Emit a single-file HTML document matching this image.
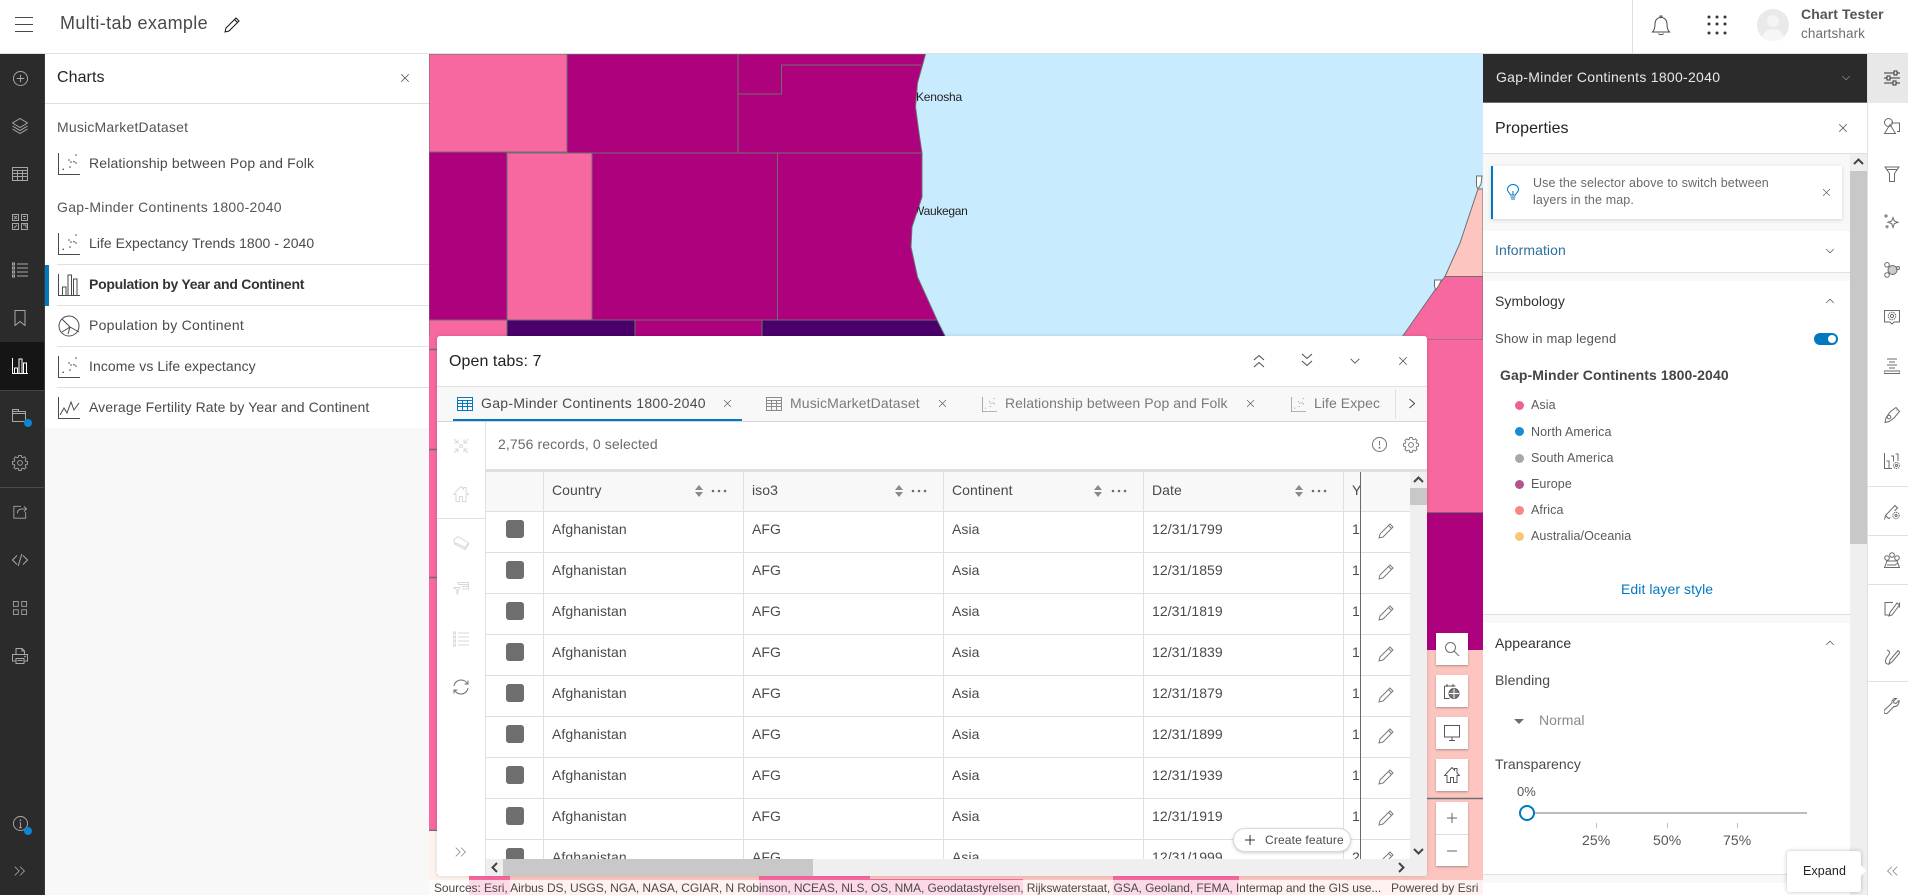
<!DOCTYPE html>
<html><head><meta charset="utf-8"><title>Multi-tab example</title>
<style>
*{box-sizing:border-box}
html,body{margin:0;padding:0;width:1908px;height:895px;overflow:hidden;background:#fff}
body{position:relative;font-family:"Liberation Sans",sans-serif;font-size:14px;color:#4a4a4a;letter-spacing:.07px}
.a{position:absolute}
.t{position:absolute;white-space:nowrap;line-height:20px}
svg.i{position:absolute;fill:none;stroke:currentColor;stroke-width:1;overflow:visible}
.dk{color:#a8a8a8}
.rw{position:absolute;left:0;width:924px;height:41px;border-bottom:1px solid #dfdfdf;background:#fff}
.rw .t{top:7px}
.cb{position:absolute;left:20px;top:8px;width:18px;height:18px;border-radius:3px;background:#6e6e6e}
.v{position:absolute;top:472px;width:1px;height:387px;background:#e0e0e0}
.btn{position:absolute;left:1436px;width:32px;background:#fff;box-shadow:0 1px 2px rgba(0,0,0,.3)}
</style></head>
<body>
<svg width="0" height="0" style="position:absolute">
<defs>
<symbol id="close" viewBox="0 0 16 16"><path d="M3 3l10 10M13 3L3 13"/></symbol>
<symbol id="cdown" viewBox="0 0 16 16"><path d="M3 5.500l5 5 5-5"/></symbol>
<symbol id="cup" viewBox="0 0 16 16"><path d="M3 10.500l5-5 5 5"/></symbol>
<symbol id="dbl" viewBox="0 0 16 16"><path d="M2 3l5 5-5 5M8 3l5 5-5 5"/></symbol>
<symbol id="dbll" viewBox="0 0 16 16"><path d="M8 3L3 8l5 5M14 3L9 8l5 5"/></symbol>
<symbol id="pen" viewBox="0 0 16 16"><path d="M1 15l1-4L12 1l3 3L5 14zM10.500 2.500l3 3"/></symbol>
<symbol id="plusc" viewBox="0 0 16 16"><circle cx="8" cy="8" r="7.500"/><path d="M8 4v8M4 8h8"/></symbol>
<symbol id="layers" viewBox="0 0 16 16"><path d="M8 .5l7.500 4.500L8 9.500.5 5zM.5 8l7.500 4.500L15.500 8M.5 11l7.500 4.500 7.500-4.500"/></symbol>
<symbol id="table" viewBox="0 0 16 16"><path d="M.5 1.500h15v13H.5zM.5 4.500h15M.5 7.500h15M.5 10.500h15M5.500 4.500v10M10.500 4.500v10"/></symbol>
<symbol id="widgets" viewBox="0 0 16 16"><path d="M.5.500h6v6h-6zM9.500 .5h6v6h-6zM.5 9.500h6v6h-6zM9.500 9.500h6v6h-6zM2 2l3 3M5 2L2 5M11 2.500h3M11.500 4.500h2M2 14l3-3M11 11h3v3"/></symbol>
<symbol id="list" viewBox="0 0 16 16"><path d="M5 2h11M5 6h11M5 10h11M5 14h11M.5 1h2v2h-2zM.5 5h2v2h-2zM.5 9h2v2h-2zM.5 13h2v2h-2z"/></symbol>
<symbol id="bmark" viewBox="0 0 16 16"><path d="M3 .5h10v15l-5-4-5 4z"/></symbol>
<symbol id="bars" viewBox="0 0 16 16"><path d="M.5 0v15.500H16M2.500 10h3v5.500h-3zM7 1h3v14.500H7zM11.500 5h3v10.500h-3z"/></symbol>
<symbol id="file" viewBox="0 0 16 16"><path d="M.5 3.500h13v10H.5zM.5 5.500h13M.5 3.500v-2h6v2"/></symbol>
<symbol id="gear" viewBox="-1 0 18 18"><path d="M6.600.5h2.800l.4 2 1.400.6 1.700-1.100 2 2-1.100 1.700.6 1.400 2 .4v2.800l-2 .4-.6 1.400 1.100 1.700-2 2-1.700-1.100-1.400.6-.4 2H6.600l-.4-2-1.400-.6-1.700 1.100-2-2 1.100-1.700-.6-1.400-2-.4V7.500l2-.4.6-1.400-1.100-1.700 2-2 1.700 1.100 1.400-.6z"/><circle cx="8" cy="8.900" r="2.700"/></symbol>
<symbol id="share" viewBox="0 0 16 16"><path d="M9 1.500H1v13.500h13.500V8M5 9.500C5 6 7 4.500 11 4.500h4M12.500 1.500l3 3-3 3"/></symbol>
<symbol id="code" viewBox="0 0 16 16"><path d="M5 3.500L.5 8 5 12.500M11 3.500L15.500 8 11 12.500M9.800 2L6.200 14"/></symbol>
<symbol id="apps" viewBox="0 0 16 16"><path d="M.5.500h5.500v5.500H.5zM10 .5h5.500v5.500H10zM.5 10h5.500v5.500H.5zM10 10h5.500v5.500H10z"/></symbol>
<symbol id="print" viewBox="0 0 16 16"><path d="M4 6V.5h6l2.500 2.500v3M10 .5V3h2.500M4 13H.5V6.500h15V13H12M4 10.500h8v5H4zM5.500 12.500h5"/><circle cx="13" cy="8.500" r=".4"/></symbol>
<symbol id="info" viewBox="0 0 16 16"><circle cx="8" cy="8" r="7.500"/><path d="M8 7v5M6.500 12.500h3M7 7h1"/><circle cx="8" cy="4.500" r=".4"/></symbol>
<symbol id="warn" viewBox="0 0 16 16"><circle cx="8" cy="8" r="7.500"/><path d="M8 4v5"/><circle cx="8" cy="11.500" r=".5"/></symbol>
<symbol id="home" viewBox="0 0 16 16"><path d="M.5 8.500L8 .5l2.500 2.700V1.500h2.500v4.500l2.500 2.500H13v7h-3.500v-5h-3v5H3v-7z"/></symbol>
<symbol id="fit" viewBox="0 0 16 16"><circle cx="8" cy="8" r="1.500"/><path d="M1 1l4 4M5 1.500V5H1.500M15 1l-4 4M11 1.500V5h3.500M1 15l4-4M1.500 11H5v3.500M15 15l-4-4M11 14.500V11h3.500"/></symbol>
<symbol id="tag" viewBox="0 0 16 16"><path d="M.5 5L5 1.500 15.500 8 12 12.500 1.500 7.500zM1.500 7.500V9L12 14.500 15.500 9.500V8M12 12.500v2"/></symbol>
<symbol id="fcard" viewBox="0 0 16 16"><path d="M5 2V.5h10.500v6.500H9M5 2.500h10.500M9 4.500h6.500M.5 5.500h6.500L5 8v3l-1 1V8z"/></symbol>
<symbol id="refresh" viewBox="0 0 16 16"><path d="M1 7C1.500 3.500 4.500 1 8 1c2.800 0 5 1.400 6.200 3.500M15 9c-.5 3.500-3.500 6-7 6-2.800 0-5-1.400-6.200-3.500M15 1.500v3.500h-3.500M1 14.500V11h3.500"/></symbol>
<symbol id="scat" viewBox="0 0 22 22"><path d="M.5 0v21.500H22"/><g fill="currentColor" stroke="none"><circle cx="5.300" cy="16.300" r=".8"/><circle cx="12" cy="14" r=".8"/><circle cx="11" cy="7" r=".8"/><circle cx="16" cy="8.700" r=".8"/><circle cx="18" cy="2" r=".8"/><circle cx="18" cy="10" r=".8"/><circle cx="13" cy="9" r=".8"/></g></symbol>
<symbol id="barsb" viewBox="0 0 22 22"><path d="M.5 0v21.500H22M4.500 13h3.500v8.500H4.500zM10 1h3.500v20.500H10zM15.500 5H19v16.500h-3.500z"/></symbol>
<symbol id="pie" viewBox="0 0 22 22"><circle cx="11" cy="11" r="10"/><path d="M4 4l8 8-8 5M12 12l9 5M12 12l-2 7"/></symbol>
<symbol id="linec" viewBox="0 0 22 22"><path d="M.5 0v21.500H22M2 18l4-7 3 5 4-11 3 8 5-7"/></symbol>
<symbol id="sliders" viewBox="0 0 16 16"><path d="M0 3h10M13 3h3M0 8h3M6 8h10M0 13h9M12 13h4M10 1h3v4h-3zM3 6h3v4H3zM9 11h3v4H9z"/></symbol>
<symbol id="shapes" viewBox="0 0 16 16"><circle cx="4.500" cy="4.500" r="4"/><path d="M7 5h8.500v8.500H13M.5 15.500L6 6.500l5.500 9z"/></symbol>
<symbol id="funnel" viewBox="0 0 16 16"><path d="M1 1h14L10.500 7.500v8h-5v-8zM2.500 3.500h11"/></symbol>
<symbol id="spark" viewBox="0 0 16 16"><path d="M9 4.500l1.300 3.500 3.700 1.300-3.700 1.300L9 14.500l-1.300-3.900L4 9.300 7.700 8zM2 1v4M0 3h4M3 12v3.500M1.300 13.700h3.500"/></symbol>
<symbol id="clust" viewBox="0 0 16 16"><circle cx="8.500" cy="8" r="4.500" fill="currentColor" fill-opacity=".35"/><circle cx="3" cy="2.800" r="2.300"/><circle cx="3" cy="13" r="2.300"/><circle cx="14" cy="6" r="1.500"/></symbol>
<symbol id="gbox" viewBox="0 0 16 16"><path d="M.5 1.500h15v11.500H10L8 15l-2-2H.5z"/><circle cx="8" cy="7" r="3.800" stroke-dasharray="1.600 .8"/><circle cx="8" cy="7" r="1.600"/></symbol>
<symbol id="align" viewBox="0 0 16 16"><path d="M3 1h10M5 4h6M3 7h10M5 10h6M0 13h16v2.500H0z"/></symbol>
<symbol id="ptag" viewBox="0 0 16 16"><path d="M6 5l6-4.500 3.500 4L10 11l-5 3.500-4 1 1-4.500zM12 3.500h.5"/><circle cx="5" cy="10" r="1.800"/></symbol>
<symbol id="bgear" viewBox="0 0 16 16"><path d="M.5 0v15.500H8M2.500 8h2.500v7M7 3h2.500v5.500M11.500 1H14v7"/><circle cx="12.500" cy="12.500" r="3" stroke-dasharray="1.300 .7"/><circle cx="12.500" cy="12.500" r="1"/></symbol>
<symbol id="pgear" viewBox="0 0 16 16"><path d="M.5 15.500l1-4L11 1.500l2.500 2.500-3 3M1.500 11.500l3 3 2-1"/><circle cx="12" cy="11.500" r="3.200" stroke-dasharray="1.400 .7"/><circle cx="12" cy="11.500" r="1"/></symbol>
<symbol id="people" viewBox="0 0 16 16"><circle cx="3" cy="6" r="2.300"/><circle cx="8" cy="3" r="2.300"/><circle cx="13" cy="6" r="2.300"/><path d="M.5 15.500L3 9h10l2.500 6.500zM3 13h8l3-2"/></symbol>
<symbol id="spen" viewBox="0 0 16 16"><path d="M9 1.500H1v12.500h5M15.500 1.500v5M5 15l1-3.500L13 2l2.500 2L8 14z"/></symbol>
<symbol id="wpen" viewBox="0 0 16 16"><path d="M5 15l1-4L14 1.500l2 2L8 13zM3 1c3 1 3 3 1.500 5S1 10 1.500 13c.3 1.500 2 2.500 3.500 2"/></symbol>
<symbol id="wrench" viewBox="0 0 16 16"><path d="M15 2.500l-3 3-2-.5-.5-2 3-2.500c-2.500-.5-5 1.500-4.500 4.500L.5 12c-.8 1-.8 2 0 3s2.200.8 3 0L10 8.500c3 .5 5.500-2.500 5-6z"/></symbol>
<symbol id="sort" viewBox="0 0 10 12"><path d="M5 0l4 5H1zM5 12l4-5H1z" fill="#8a8a8a" stroke="none"/></symbol>
<symbol id="dots" viewBox="0 0 16 4"><circle cx="2" cy="2" r="1.300" fill="#6e6e6e" stroke="none"/><circle cx="8" cy="2" r="1.300" fill="#6e6e6e" stroke="none"/><circle cx="14" cy="2" r="1.300" fill="#6e6e6e" stroke="none"/></symbol>
</defs>
</svg>

<!-- MAP -->
<svg class="a" style="left:0;top:0" width="1908" height="895" viewBox="0 0 1908 895">
<rect x="429" y="54" width="1054" height="841" fill="#c8ecfe"/>
<g stroke="#6e6e6e" stroke-width="1">
<rect x="429" y="54" width="138" height="98" fill="#f768a1"/>
<path d="M567 54H925.500L917.500 83 915.500 107 919 133 922 153 567 153z" fill="#ae017e"/>
<path d="M738 54V153M738 94H781.500V65H921" fill="none"/>
<rect x="429" y="152" width="78" height="168" fill="#ae017e"/>
<rect x="507" y="153" width="85" height="167" fill="#f768a1"/>
<path d="M592 153H922L922 197 912 227 911 247 917.500 277 937 320H592z" fill="#ae017e"/>
<path d="M777.500 153V320" fill="none"/>
<rect x="429" y="320" width="78" height="20" fill="#f768a1"/>
<rect x="507" y="320" width="128" height="20" fill="#49006a"/>
<rect x="635" y="320" width="127" height="20" fill="#ae017e"/>
<path d="M762 320H937L947 340H762z" fill="#49006a"/>
<path d="M1445 276.500L1460 243 1470 213 1478 189H1483V276.500z" fill="#fcc5c0"/>
<path d="M1400 340L1435 290 1445 276.500H1483V340z" fill="#f768a1"/>
<path d="M1476.500 176h5.500l-1 8-3 5-1.500-3zM1434.500 280h7l-3 6-3 4-1-4z" fill="#fff"/>
</g>
<rect x="429" y="336" width="8" height="495" fill="#f768a1"/>
<path d="M429 349.500h8M429 449.500h8M429 577.500h8M429 830.500h8" stroke="#6e6e6e" stroke-width="1.500"/>
<rect x="429" y="831" width="8" height="64" fill="#fdf3ee"/>
<rect x="1412" y="340" width="71" height="173" fill="#f768a1"/>
<rect x="1412" y="513" width="71" height="137" fill="#ae017e"/>
<path d="M1427 512.500h56" stroke="#6e6e6e"/>
<rect x="1427" y="650" width="56" height="245" fill="#fcc5c0"/>
<path d="M1427 798.500h56" stroke="#6e6e6e" stroke-width="1.500"/>
<rect x="437" y="876" width="990" height="19" fill="#fcc5c0"/>
<rect x="437" y="876" width="32" height="19" fill="#fdf3ee"/>
<rect x="469" y="876" width="41" height="19" fill="#f768a1"/>
<rect x="759" y="876" width="264" height="19" fill="#f768a1"/>
<rect x="1113" y="876" width="126" height="19" fill="#f768a1"/>
<rect x="870" y="876" width="153" height="3" fill="#fcc5c0"/>
</svg>
<div class="a" style="left:429px;top:880px;width:1054px;height:15px;background:rgba(255,255,255,.75)"></div>
<div class="t" style="left:434px;top:878px;font-size:12px;color:#4a4a4a;letter-spacing:-.08px">Sources: Esri, Airbus DS, USGS, NGA, NASA, CGIAR, N Robinson, NCEAS, NLS, OS, NMA, Geodatastyrelsen, Rijkswaterstaat, GSA, Geoland, FEMA, Intermap and the GIS use...</div>
<div class="t" style="left:1391px;top:878px;font-size:12px;letter-spacing:0">Powered by Esri</div>
<div class="t" style="left:916px;top:87px;font-size:12px;color:#222;letter-spacing:-.2px">Kenosha</div>
<div class="t" style="left:913px;top:201px;font-size:12px;color:#222;letter-spacing:-.3px;clip-path:inset(0 0 0 4px)">Waukegan</div>

<!-- HEADER -->
<div class="a" style="left:0;top:0;width:1908px;height:54px;background:#fff;border-bottom:1px solid #e0e0e0"></div>
<div class="a" style="left:15px;top:17px;width:18px;height:15px;border-top:1px solid #4a4a4a;border-bottom:1px solid #4a4a4a"></div>
<div class="a" style="left:15px;top:24px;width:18px;height:1px;background:#4a4a4a"></div>
<div class="t" style="left:60px;top:13px;font-size:18px;letter-spacing:.35px">Multi-tab example</div>
<svg class="i" style="left:224px;top:17px;color:#151515" width="16" height="16"><use href="#pen"/></svg>
<div class="a" style="left:1632px;top:0;width:1px;height:53px;background:#e0e0e0"></div>
<svg class="i" style="left:1652px;top:15px;color:#4a4a4a" width="18" height="21" viewBox="0 0 18 21"><path d="M.5 17c2-2 2.500-4 2.500-8 0-4 2.500-6.500 6-6.500s6 2.500 6 6.500c0 4 .5 6 2.500 8zM8 2.500V1h2v1.500M6.500 18.500c.5 1.500 4.500 1.500 5 0"/></svg>
<svg class="a" style="left:1706px;top:14px" width="22" height="22"><g fill="#333"><circle cx="3" cy="3" r="1.500"/><circle cx="11" cy="3" r="1.500"/><circle cx="19" cy="3" r="1.500"/><circle cx="3" cy="10" r="1.500"/><circle cx="11" cy="10" r="1.500"/><circle cx="19" cy="10" r="1.500"/><circle cx="3" cy="19" r="1.500"/><circle cx="11" cy="19" r="1.500"/><circle cx="19" cy="19" r="1.500"/></g></svg>
<svg class="a" style="left:1757px;top:9px" width="32" height="32"><circle cx="16" cy="16" r="16" fill="#e9e9e9"/><circle cx="16" cy="12" r="6" fill="#f4f4f4"/><path d="M5 29c2-7 6-9 11-9s9 2 11 9c-3 2-7 3-11 3s-8-1-11-3z" fill="#f6f6f6"/></svg>
<div class="t" style="left:1801px;top:4px;font-weight:bold;color:#555;letter-spacing:.1px">Chart Tester</div>
<div class="t" style="left:1801px;top:24px;color:#6e6e6e;letter-spacing:.1px;font-size:13.500px">chartshark</div>

<!-- LEFT RAIL -->
<div class="a" style="left:0;top:54px;width:45px;height:841px;background:#2b2b2b;border-right:1px solid #3a3a3a"></div>
<div class="a" style="left:0;top:342px;width:44px;height:48px;background:#151515"></div>
<div class="a" style="left:0;top:390px;width:44px;height:1px;background:#444"></div>
<div class="a" style="left:0;top:487px;width:44px;height:1px;background:#4a4a4a"></div>
<svg class="i dk" style="left:13px;top:71px" width="15" height="15"><use href="#plusc"/></svg>
<svg class="i dk" style="left:12px;top:118px" width="16" height="16"><use href="#layers"/></svg>
<svg class="i dk" style="left:12px;top:166px" width="16" height="16"><use href="#table"/></svg>
<svg class="i dk" style="left:12px;top:214px" width="16" height="16"><use href="#widgets"/></svg>
<svg class="i dk" style="left:12px;top:262px" width="16" height="16"><use href="#list"/></svg>
<svg class="i dk" style="left:12px;top:310px" width="16" height="16"><use href="#bmark"/></svg>
<svg class="i" style="left:12px;top:358px;color:#fff" width="16" height="16"><use href="#bars"/></svg>
<svg class="i dk" style="left:12px;top:408px" width="16" height="16"><use href="#file"/></svg>
<div class="a" style="left:24px;top:419px;width:8px;height:8px;border-radius:50%;background:#0b85d4"></div>
<svg class="i dk" style="left:12px;top:455px" width="16" height="16"><use href="#gear"/></svg>
<svg class="i dk" style="left:13px;top:505px" width="14" height="14"><use href="#share"/></svg>
<svg class="i dk" style="left:12px;top:552px" width="16" height="16"><use href="#code"/></svg>
<svg class="i dk" style="left:13px;top:601px" width="14" height="14"><use href="#apps"/></svg>
<svg class="i dk" style="left:12px;top:648px" width="16" height="16"><use href="#print"/></svg>
<svg class="i dk" style="left:13px;top:816px" width="15" height="15"><use href="#info"/></svg>
<div class="a" style="left:24px;top:827px;width:8px;height:8px;border-radius:50%;background:#0b85d4"></div>
<svg class="i dk" style="left:13px;top:864px" width="14" height="14"><use href="#dbl"/></svg>

<!-- CHARTS PANEL -->
<div class="a" style="left:45px;top:54px;width:384px;height:841px;background:#f8f8f8"></div>
<div class="a" style="left:45px;top:54px;width:384px;height:374px;background:#fff"></div>
<div class="a" style="left:45px;top:103px;width:384px;height:1px;background:#e0e0e0"></div>
<div class="t" style="left:57px;top:68px;font-size:16px;color:#222">Charts</div>
<svg class="i" style="left:399px;top:72px;color:#4a4a4a" width="12" height="12"><use href="#close"/></svg>
<div class="t" style="left:57px;top:117px;color:#555;letter-spacing:.2px">MusicMarketDataset</div>
<div class="t" style="left:57px;top:197px;color:#555;letter-spacing:.3px">Gap-Minder Continents 1800-2040</div>
<svg class="i" style="left:58px;top:153px;color:#4a4a4a" width="22" height="22"><use href="#scat"/></svg>
<div class="t" style="left:89px;top:153px;letter-spacing:.15px">Relationship between Pop and Folk</div>
<svg class="i" style="left:58px;top:233px;color:#4a4a4a" width="22" height="22"><use href="#scat"/></svg>
<div class="t" style="left:89px;top:233px;letter-spacing:.03px">Life Expectancy Trends 1800 - 2040</div>
<div class="a" style="left:57px;top:264px;width:372px;height:1px;background:#e0e0e0"></div>
<div class="a" style="left:45px;top:265px;width:4px;height:41px;background:#0079c1"></div>
<svg class="i" style="left:58px;top:274px;color:#4a4a4a" width="22" height="22"><use href="#barsb"/></svg>
<div class="t" style="left:89px;top:274px;font-weight:bold;color:#333;letter-spacing:-.27px">Population by Year and Continent</div>
<div class="a" style="left:57px;top:305px;width:372px;height:1px;background:#e0e0e0"></div>
<svg class="i" style="left:58px;top:315px;color:#4a4a4a" width="22" height="22"><use href="#pie"/></svg>
<div class="t" style="left:89px;top:315px;letter-spacing:.28px">Population by Continent</div>
<div class="a" style="left:57px;top:346px;width:372px;height:1px;background:#e0e0e0"></div>
<svg class="i" style="left:58px;top:356px;color:#4a4a4a" width="22" height="22"><use href="#scat"/></svg>
<div class="t" style="left:89px;top:356px">Income vs Life expectancy</div>
<div class="a" style="left:57px;top:387px;width:372px;height:1px;background:#e0e0e0"></div>
<svg class="i" style="left:58px;top:397px;color:#4a4a4a" width="22" height="22"><use href="#linec"/></svg>
<div class="t" style="left:89px;top:397px;letter-spacing:.1px">Average Fertility Rate by Year and Continent</div>

<!-- TABLE PANEL -->
<div class="a" style="left:437px;top:336px;width:990px;height:540px;background:#fff;border-radius:3px;box-shadow:0 0 4px rgba(0,0,0,.15)"></div>
<div class="t" style="left:449px;top:352px;font-size:16px;color:#222">Open tabs: 7</div>
<svg class="i" style="left:1252px;top:354px;color:#4a4a4a" width="14" height="14"><path d="M2 6l5-4.500L12 6M2 13l5-4.500 5 4.500"/></svg>
<svg class="i" style="left:1300px;top:353px;color:#4a4a4a" width="14" height="14"><path d="M2 1l5 4.500L12 1M2 8l5 4.500L12 8"/></svg>
<svg class="i" style="left:1348px;top:354px;color:#4a4a4a" width="14" height="14" viewBox="0 0 16 16"><use href="#cdown"/></svg>
<svg class="i" style="left:1397px;top:355px;color:#4a4a4a" width="12" height="12"><use href="#close"/></svg>
<div class="a" style="left:437px;top:386px;width:990px;height:36px;background:#f8f8f8;border-top:1px solid #e0e0e0;border-bottom:1px solid #d5d5d5"></div>
<div class="a" style="left:453px;top:419px;width:289px;height:2px;background:#0079c1"></div>
<svg class="i" style="left:457px;top:396px;color:#0079c1" width="16" height="16"><use href="#table"/></svg>
<div class="t" style="left:481px;top:393px;color:#4a4a4a;letter-spacing:.3px">Gap-Minder Continents 1800-2040</div>
<svg class="i" style="left:722px;top:398px;color:#4a4a4a" width="11" height="11"><use href="#close"/></svg>
<svg class="i" style="left:766px;top:396px;color:#8a8a8a" width="16" height="16"><use href="#table"/></svg>
<div class="t" style="left:790px;top:393px;color:#7a7a7a;letter-spacing:.12px">MusicMarketDataset</div>
<svg class="i" style="left:937px;top:398px;color:#4a4a4a" width="11" height="11"><use href="#close"/></svg>
<svg class="i" style="left:982px;top:397px;color:#8a8a8a" width="15" height="15"><use href="#scat"/></svg>
<div class="t" style="left:1005px;top:393px;color:#7a7a7a">Relationship between Pop and Folk</div>
<svg class="i" style="left:1245px;top:398px;color:#4a4a4a" width="11" height="11"><use href="#close"/></svg>
<svg class="i" style="left:1291px;top:397px;color:#8a8a8a" width="15" height="15"><use href="#scat"/></svg>
<div class="t" style="left:1314px;top:393px;color:#7a7a7a;width:66px;overflow:hidden">Life Expec</div>
<div class="a" style="left:1395px;top:389px;width:1px;height:30px;background:#e0e0e0"></div>
<svg class="i" style="left:1408px;top:398px;color:#4a4a4a" width="8" height="11"><path d="M1.500 1l5 4.500-5 4.500"/></svg>

<!-- table sidebar -->
<div class="a" style="left:485px;top:422px;width:1px;height:454px;background:#e0e0e0"></div>
<div class="a" style="left:437px;top:518px;width:48px;height:1px;background:#e0e0e0"></div>
<svg class="i" style="left:453px;top:438px;color:#d8d8d8" width="16" height="16"><use href="#fit"/></svg>
<svg class="i" style="left:453px;top:486px;color:#d8d8d8" width="16" height="16"><use href="#home"/></svg>
<svg class="i" style="left:453px;top:535px;color:#d8d8d8" width="16" height="16"><use href="#tag"/></svg>
<svg class="i" style="left:453px;top:582px;color:#d8d8d8" width="16" height="16"><use href="#fcard"/></svg>
<svg class="i" style="left:453px;top:631px;color:#d8d8d8" width="16" height="16"><use href="#list"/></svg>
<svg class="i" style="left:453px;top:679px;color:#6e6e6e" width="16" height="16"><use href="#refresh"/></svg>
<svg class="i" style="left:454px;top:845px;color:#8a8a8a" width="14" height="14"><use href="#dbl"/></svg>

<!-- toolbar -->
<div class="t" style="left:498px;top:434px;color:#6a6a6a;letter-spacing:.1px">2,756 records, 0 selected</div>
<svg class="i" style="left:1372px;top:437px;color:#6e6e6e" width="15" height="15"><use href="#warn"/></svg>
<svg class="i" style="left:1403px;top:437px;color:#6e6e6e" width="16" height="16"><use href="#gear"/></svg>
<div class="a" style="left:486px;top:469px;width:941px;height:3px;background:#e0e0e0"></div>

<!-- table head -->
<div class="a" style="left:486px;top:472px;width:924px;height:40px;background:#f8f8f8;border-bottom:1px solid #dfdfdf"></div>
<div class="t" style="left:552px;top:480px;color:#4a4a4a">Country</div>
<svg class="a" style="left:694px;top:485px" width="10" height="12"><use href="#sort"/></svg>
<svg class="a" style="left:711px;top:489px" width="16" height="4"><use href="#dots"/></svg>
<div class="t" style="left:752px;top:480px">iso3</div>
<svg class="a" style="left:894px;top:485px" width="10" height="12"><use href="#sort"/></svg>
<svg class="a" style="left:911px;top:489px" width="16" height="4"><use href="#dots"/></svg>
<div class="t" style="left:952px;top:480px">Continent</div>
<svg class="a" style="left:1093px;top:485px" width="10" height="12"><use href="#sort"/></svg>
<svg class="a" style="left:1111px;top:489px" width="16" height="4"><use href="#dots"/></svg>
<div class="t" style="left:1152px;top:480px">Date</div>
<svg class="a" style="left:1294px;top:485px" width="10" height="12"><use href="#sort"/></svg>
<svg class="a" style="left:1311px;top:489px" width="16" height="4"><use href="#dots"/></svg>
<div class="t" style="left:1352px;top:480px;width:8px;overflow:hidden">Y</div>

<!-- rows -->
<div class="a" style="left:486px;top:512px;width:924px;height:347px;overflow:hidden">
<div class="rw" style="top:0"><div class="cb"></div><div class="t" style="left:66px">Afghanistan</div><div class="t" style="left:266px">AFG</div><div class="t" style="left:466px">Asia</div><div class="t" style="left:666px">12/31/1799</div><div class="t" style="left:866px">1</div><svg class="i" style="left:892px;top:11px;color:#7a7a7a" width="16" height="16"><use href="#pen"/></svg></div>
<div class="rw" style="top:41px"><div class="cb"></div><div class="t" style="left:66px">Afghanistan</div><div class="t" style="left:266px">AFG</div><div class="t" style="left:466px">Asia</div><div class="t" style="left:666px">12/31/1859</div><div class="t" style="left:866px">1</div><svg class="i" style="left:892px;top:11px;color:#7a7a7a" width="16" height="16"><use href="#pen"/></svg></div>
<div class="rw" style="top:82px"><div class="cb"></div><div class="t" style="left:66px">Afghanistan</div><div class="t" style="left:266px">AFG</div><div class="t" style="left:466px">Asia</div><div class="t" style="left:666px">12/31/1819</div><div class="t" style="left:866px">1</div><svg class="i" style="left:892px;top:11px;color:#7a7a7a" width="16" height="16"><use href="#pen"/></svg></div>
<div class="rw" style="top:123px"><div class="cb"></div><div class="t" style="left:66px">Afghanistan</div><div class="t" style="left:266px">AFG</div><div class="t" style="left:466px">Asia</div><div class="t" style="left:666px">12/31/1839</div><div class="t" style="left:866px">1</div><svg class="i" style="left:892px;top:11px;color:#7a7a7a" width="16" height="16"><use href="#pen"/></svg></div>
<div class="rw" style="top:164px"><div class="cb"></div><div class="t" style="left:66px">Afghanistan</div><div class="t" style="left:266px">AFG</div><div class="t" style="left:466px">Asia</div><div class="t" style="left:666px">12/31/1879</div><div class="t" style="left:866px">1</div><svg class="i" style="left:892px;top:11px;color:#7a7a7a" width="16" height="16"><use href="#pen"/></svg></div>
<div class="rw" style="top:205px"><div class="cb"></div><div class="t" style="left:66px">Afghanistan</div><div class="t" style="left:266px">AFG</div><div class="t" style="left:466px">Asia</div><div class="t" style="left:666px">12/31/1899</div><div class="t" style="left:866px">1</div><svg class="i" style="left:892px;top:11px;color:#7a7a7a" width="16" height="16"><use href="#pen"/></svg></div>
<div class="rw" style="top:246px"><div class="cb"></div><div class="t" style="left:66px">Afghanistan</div><div class="t" style="left:266px">AFG</div><div class="t" style="left:466px">Asia</div><div class="t" style="left:666px">12/31/1939</div><div class="t" style="left:866px">1</div><svg class="i" style="left:892px;top:11px;color:#7a7a7a" width="16" height="16"><use href="#pen"/></svg></div>
<div class="rw" style="top:287px"><div class="cb"></div><div class="t" style="left:66px">Afghanistan</div><div class="t" style="left:266px">AFG</div><div class="t" style="left:466px">Asia</div><div class="t" style="left:666px">12/31/1919</div><div class="t" style="left:866px">1</div><svg class="i" style="left:892px;top:11px;color:#7a7a7a" width="16" height="16"><use href="#pen"/></svg></div>
<div class="rw" style="top:328px"><div class="cb"></div><div class="t" style="left:66px">Afghanistan</div><div class="t" style="left:266px">AFG</div><div class="t" style="left:466px">Asia</div><div class="t" style="left:666px">12/31/1999</div><div class="t" style="left:866px">2</div><svg class="i" style="left:892px;top:11px;color:#7a7a7a" width="16" height="16"><use href="#pen"/></svg></div>
<div class="a" style="left:57px;top:0;width:1px;height:347px;background:#e0e0e0"></div>
<div class="a" style="left:257px;top:0;width:1px;height:347px;background:#e0e0e0"></div>
<div class="a" style="left:457px;top:0;width:1px;height:347px;background:#e0e0e0"></div>
<div class="a" style="left:657px;top:0;width:1px;height:347px;background:#e0e0e0"></div>
<div class="a" style="left:857px;top:0;width:1px;height:347px;background:#e0e0e0"></div>
</div>
<div class="v" style="left:543px;height:40px"></div><div class="v" style="left:743px;height:40px"></div><div class="v" style="left:943px;height:40px"></div><div class="v" style="left:1143px;height:40px"></div><div class="v" style="left:1343px;height:40px"></div>
<div class="a" style="left:1360px;top:472px;width:1px;height:387px;background:#6a6a6a"></div>

<!-- scrollbars -->
<div class="a" style="left:1410px;top:472px;width:17px;height:387px;background:#efefef"></div>
<div class="a" style="left:1410px;top:488px;width:17px;height:17px;background:#c8c8c8"></div>
<svg class="i" style="left:1413px;top:476px;color:#444;stroke-width:2" width="11" height="7"><path d="M1 6l4.500-4.500L10 6"/></svg>
<svg class="i" style="left:1413px;top:848px;color:#444;stroke-width:2" width="11" height="7"><path d="M1 1l4.500 4.500L10 1"/></svg>
<div class="a" style="left:486px;top:859px;width:941px;height:17px;background:#efefef;border-radius:0 0 3px 0"></div>
<div class="a" style="left:503px;top:859px;width:310px;height:17px;background:#c8c8c8"></div>
<svg class="i" style="left:491px;top:862px;color:#444;stroke-width:2" width="7" height="11"><path d="M6 1L1.500 5.500 6 10"/></svg>
<svg class="i" style="left:1398px;top:862px;color:#444;stroke-width:2" width="7" height="11"><path d="M1 1l4.500 4.500L1 10"/></svg>

<!-- create feature -->
<div class="a" style="left:1233px;top:828px;width:118px;height:24px;background:#fff;border:1px solid #d8d8d8;border-radius:12px;box-shadow:0 1px 3px rgba(0,0,0,.2)"></div>
<svg class="i" style="left:1245px;top:835px;color:#333" width="10" height="10"><path d="M5 0v10M0 5h10"/></svg>
<div class="t" style="left:1265px;top:830px;font-size:12px;color:#4a4a4a;letter-spacing:.15px">Create feature</div>

<!-- map controls -->
<div class="btn" style="top:633px;height:32px"></div>
<svg class="i" style="left:1445px;top:642px;color:#6e6e6e" width="14" height="14"><circle cx="5.500" cy="5.500" r="5"/><path d="M9 9l5 5"/></svg>
<div class="btn" style="top:675px;height:32px"></div>
<svg class="i" style="left:1444px;top:683px;color:#555" width="16" height="16"><path d="M.5 3h11M.5 3v12.500h5M3 1v3M9 1v3"/><circle cx="10" cy="10.500" r="5" fill="#777"/><path d="M5 10.500h10M10 5.500v10" stroke="#fff"/></svg>
<div class="btn" style="top:717px;height:32px"></div>
<svg class="i" style="left:1444px;top:725px;color:#555" width="16" height="16"><path d="M.5 .5h15v11.500H.5zM8 12v3M5 15.500h6"/></svg>
<div class="btn" style="top:759px;height:32px"></div>
<svg class="i" style="left:1444px;top:767px;color:#555" width="16" height="16"><use href="#home"/></svg>
<div class="btn" style="top:802px;height:64px"></div>
<div class="a" style="left:1436px;top:834px;width:32px;height:1px;background:#ddd"></div>
<svg class="i" style="left:1447px;top:813px;color:#666" width="10" height="10"><path d="M5 0v10M0 5h10"/></svg>
<svg class="i" style="left:1447px;top:846px;color:#666" width="10" height="10"><path d="M0 5h10"/></svg>

<!-- PROPERTIES -->
<div class="a" style="left:1483px;top:54px;width:384px;height:841px;background:#f8f8f8"></div>
<div class="a" style="left:1483px;top:54px;width:384px;height:49px;background:#2b2b2b;border-bottom:1px solid #6e6e6e"></div>
<div class="t" style="left:1496px;top:67px;color:#e8e8e8;letter-spacing:.28px">Gap-Minder Continents 1800-2040</div>
<svg class="i" style="left:1840px;top:72px;color:#8a8a8a" width="12" height="12" viewBox="0 0 16 16"><use href="#cdown"/></svg>
<div class="a" style="left:1483px;top:103px;width:384px;height:51px;background:#fff;border-bottom:1px solid #e0e0e0"></div>
<div class="t" style="left:1495px;top:119px;font-size:16px;color:#222">Properties</div>
<svg class="i" style="left:1837px;top:122px;color:#4a4a4a" width="12" height="12"><use href="#close"/></svg>

<div class="a" style="left:1491px;top:166px;width:351px;height:53px;background:#fff;border-left:2px solid #0079c1;box-shadow:0 1px 4px rgba(0,0,0,.15)"></div>
<svg class="i" style="left:1507px;top:184px;color:#0079c1" width="12" height="16" viewBox="0 0 12 16"><path d="M3.500 11C3 9 .5 8 .5 5.500a5.500 5 0 0 1 11 0C11.500 8 9 9 8.500 11zM3.500 13h5M4 15h4M6 11V7"/></svg>
<div class="t" style="left:1533px;top:173px;font-size:12.500px;color:#6a6a6a;letter-spacing:.13px">Use the selector above to switch between</div>
<div class="t" style="left:1533px;top:190px;font-size:12.500px;color:#6a6a6a;letter-spacing:.13px">layers in the map.</div>
<svg class="i" style="left:1821px;top:187px;color:#4a4a4a" width="11" height="11"><use href="#close"/></svg>

<div class="a" style="left:1483px;top:231px;width:367px;height:42px;background:#fff;border-bottom:1px solid #e0e0e0"></div>
<div class="t" style="left:1495px;top:240px;color:#2d6f9c">Information</div>
<svg class="i" style="left:1824px;top:245px;color:#555" width="12" height="12" viewBox="0 0 16 16"><use href="#cdown"/></svg>

<div class="a" style="left:1483px;top:281px;width:367px;height:334px;background:#fff;border-bottom:1px solid #e0e0e0"></div>
<div class="t" style="left:1495px;top:291px;color:#333">Symbology</div>
<svg class="i" style="left:1824px;top:295px;color:#555" width="12" height="12" viewBox="0 0 16 16"><use href="#cup"/></svg>
<div class="t" style="left:1495px;top:329px;font-size:13px;color:#555;letter-spacing:.2px">Show in map legend</div>
<div class="a" style="left:1814px;top:333px;width:24px;height:12px;border-radius:6px;background:#0079c1"></div>
<div class="a" style="left:1828px;top:335px;width:8px;height:8px;border-radius:50%;background:#fff"></div>
<div class="t" style="left:1500px;top:365px;font-weight:bold;color:#444;letter-spacing:.1px">Gap-Minder Continents 1800-2040</div>
<div class="a" style="left:1515px;top:401px;width:9px;height:9px;border-radius:50%;background:#ec6294"></div>
<div class="t" style="left:1531px;top:395px;font-size:12.500px;color:#5a5a5a;letter-spacing:.1px">Asia</div>
<div class="a" style="left:1515px;top:427px;width:9px;height:9px;border-radius:50%;background:#1a8ad4"></div>
<div class="t" style="left:1531px;top:422px;font-size:12.500px;color:#5a5a5a;letter-spacing:.1px">North America</div>
<div class="a" style="left:1515px;top:454px;width:9px;height:9px;border-radius:50%;background:#a8a8a8"></div>
<div class="t" style="left:1531px;top:448px;font-size:12.500px;color:#5a5a5a;letter-spacing:.1px">South America</div>
<div class="a" style="left:1515px;top:480px;width:9px;height:9px;border-radius:50%;background:#b2558b"></div>
<div class="t" style="left:1531px;top:474px;font-size:12.500px;color:#5a5a5a;letter-spacing:.1px">Europe</div>
<div class="a" style="left:1515px;top:506px;width:9px;height:9px;border-radius:50%;background:#f98585"></div>
<div class="t" style="left:1531px;top:500px;font-size:12.500px;color:#5a5a5a;letter-spacing:.1px">Africa</div>
<div class="a" style="left:1515px;top:532px;width:9px;height:9px;border-radius:50%;background:#fcc67a"></div>
<div class="t" style="left:1531px;top:526px;font-size:12.500px;color:#5a5a5a;letter-spacing:.1px">Australia/Oceania</div>
<div class="t" style="left:1621px;top:579px;color:#0079c1">Edit layer style</div>

<div class="a" style="left:1483px;top:623px;width:367px;height:252px;background:#fff;border-bottom:1px solid #e0e0e0"></div>
<div class="a" style="left:1483px;top:883px;width:367px;height:12px;background:#fff"></div>
<div class="t" style="left:1495px;top:633px;color:#333">Appearance</div>
<svg class="i" style="left:1824px;top:637px;color:#555" width="12" height="12" viewBox="0 0 16 16"><use href="#cup"/></svg>
<div class="t" style="left:1495px;top:670px;color:#4a4a4a">Blending</div>
<svg class="a" style="left:1514px;top:719px" width="10" height="5"><path d="M0 0h10L5 5z" fill="#6e6e6e"/></svg>
<div class="t" style="left:1539px;top:710px;color:#8a8a8a">Normal</div>
<div class="t" style="left:1495px;top:754px;color:#4a4a4a">Transparency</div>
<div class="t" style="left:1517px;top:782px;font-size:13px;color:#555">0%</div>
<div class="a" style="left:1527px;top:812px;width:280px;height:2px;background:#bdbdbd"></div>
<div class="a" style="left:1519px;top:805px;width:16px;height:16px;border-radius:50%;background:#fff;border:2px solid #0079c1"></div>
<div class="a" style="left:1596px;top:823px;width:1px;height:5px;background:#bbb"></div>
<div class="a" style="left:1667px;top:823px;width:1px;height:5px;background:#bbb"></div>
<div class="a" style="left:1737px;top:823px;width:1px;height:5px;background:#bbb"></div>
<div class="t" style="left:1582px;top:830px;color:#555">25%</div>
<div class="t" style="left:1653px;top:830px;color:#555">50%</div>
<div class="t" style="left:1723px;top:830px;color:#555">75%</div>

<!-- prop scrollbar -->
<div class="a" style="left:1850px;top:154px;width:17px;height:741px;background:#efefef"></div>
<div class="a" style="left:1850px;top:171px;width:17px;height:373px;background:#c8c8c8"></div>
<svg class="i" style="left:1853px;top:158px;color:#444;stroke-width:2" width="11" height="7"><path d="M1 6l4.500-4.500L10 6"/></svg>

<!-- expand tooltip -->
<div class="a" style="left:1787px;top:851px;width:74px;height:41px;background:#fff;border-radius:3px;box-shadow:0 0 4px rgba(0,0,0,.25)"></div>
<div class="a" style="left:1858px;top:867px;width:7px;height:7px;background:#fff;transform:rotate(45deg)"></div>
<div class="t" style="left:1803px;top:861px;font-size:12.500px;color:#222;letter-spacing:.1px">Expand</div>

<!-- RIGHT RAIL -->
<div class="a" style="left:1867px;top:54px;width:41px;height:841px;background:#fff;border-left:1px solid #e0e0e0"></div>
<div class="a" style="left:1868px;top:54px;width:40px;height:49px;background:#e8e8e8"></div>
<div class="a" style="left:1868px;top:486px;width:40px;height:1px;background:#e0e0e0"></div>
<div class="a" style="left:1868px;top:535px;width:40px;height:1px;background:#e0e0e0"></div>
<div class="a" style="left:1868px;top:584px;width:40px;height:1px;background:#e0e0e0"></div>
<div class="a" style="left:1868px;top:681px;width:40px;height:1px;background:#e0e0e0"></div>
<svg class="i" style="left:1884px;top:70px;color:#333" width="16" height="16"><use href="#sliders"/></svg>
<svg class="i" style="left:1884px;top:118px;color:#6a6a6a" width="16" height="16"><use href="#shapes"/></svg>
<svg class="i" style="left:1884px;top:166px;color:#6a6a6a" width="16" height="16"><use href="#funnel"/></svg>
<svg class="i" style="left:1884px;top:213px;color:#6a6a6a" width="16" height="16"><use href="#spark"/></svg>
<svg class="i" style="left:1884px;top:262px;color:#6a6a6a" width="16" height="16"><use href="#clust"/></svg>
<svg class="i" style="left:1884px;top:309px;color:#6a6a6a" width="16" height="16"><use href="#gbox"/></svg>
<svg class="i" style="left:1884px;top:358px;color:#6a6a6a" width="16" height="16"><use href="#align"/></svg>
<svg class="i" style="left:1884px;top:407px;color:#6a6a6a" width="16" height="16"><use href="#ptag"/></svg>
<svg class="i" style="left:1884px;top:453px;color:#6a6a6a" width="16" height="16"><use href="#bgear"/></svg>
<svg class="i" style="left:1884px;top:504px;color:#6a6a6a" width="16" height="16"><use href="#pgear"/></svg>
<svg class="i" style="left:1884px;top:552px;color:#6a6a6a" width="16" height="16"><use href="#people"/></svg>
<svg class="i" style="left:1884px;top:601px;color:#6a6a6a" width="16" height="16"><use href="#spen"/></svg>
<svg class="i" style="left:1884px;top:649px;color:#6a6a6a" width="16" height="16"><use href="#wpen"/></svg>
<svg class="i" style="left:1884px;top:698px;color:#6a6a6a" width="16" height="16"><use href="#wrench"/></svg>
<svg class="i" style="left:1885px;top:864px;color:#8a8a8a" width="14" height="14"><use href="#dbll"/></svg>
</body></html>
